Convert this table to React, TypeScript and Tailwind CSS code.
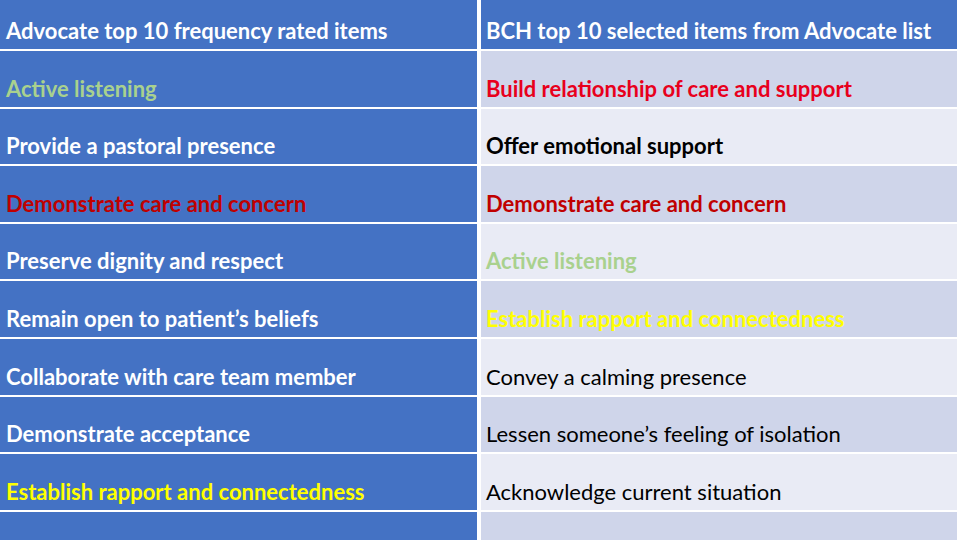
import { Fragment } from 'react';

const rows: { left: string; leftColor: string; right: string; rightColor: string; rightBold: boolean }[] = [
  { left: 'Active listening', leftColor: 'text-[#a9d18e]', right: 'Build relationship of care and support', rightColor: 'text-[#e8001c]', rightBold: true },
  { left: 'Provide a pastoral presence', leftColor: 'text-white', right: 'Offer emotional support', rightColor: 'text-black', rightBold: true },
  { left: 'Demonstrate care and concern', leftColor: 'text-[#c00000]', right: 'Demonstrate care and concern', rightColor: 'text-[#c00000]', rightBold: true },
  { left: 'Preserve dignity and respect', leftColor: 'text-white', right: 'Active listening', rightColor: 'text-[#a9d18e]', rightBold: true },
  { left: 'Remain open to patient\u2019s beliefs', leftColor: 'text-white', right: 'Establish rapport and connectedness', rightColor: 'text-[#ffff00]', rightBold: true },
  { left: 'Collaborate with care team member', leftColor: 'text-white', right: 'Convey a calming presence', rightColor: 'text-black', rightBold: false },
  { left: 'Demonstrate acceptance', leftColor: 'text-white', right: 'Lessen someone\u2019s feeling of isolation', rightColor: 'text-black', rightBold: false },
  { left: 'Establish rapport and connectedness', leftColor: 'text-[#ffff00]', right: 'Acknowledge current situation', rightColor: 'text-black', rightBold: false },
];

export default function App() {
  return (
    <div className="w-[960px] h-[540px] overflow-hidden bg-white font-['Lato',sans-serif] text-[22px] leading-[24px]">
      <div className="grid grid-cols-[477px_476px] gap-x-[4px] gap-y-[2px] auto-rows-[55.6px] grid-rows-[49px]">
        {/* header */}
        <div className="flex items-end pl-[6px] pb-[6px] bg-[#4472c4] font-bold text-white whitespace-nowrap">
          Advocate top 10 frequency rated items
        </div>
        <div className="flex items-end pl-[5px] pb-[6px] bg-[#4472c4] font-bold text-white whitespace-nowrap">
          BCH top 10 selected items from Advocate list
        </div>

        {rows.map((r, i) => (
          <Fragment key={i}>
            <div className={`flex items-end pl-[6px] pb-[6px] bg-[#4472c4] font-bold whitespace-nowrap ${r.leftColor}`}>
              {r.left}
            </div>
            <div
              className={`flex items-end pl-[5px] pb-[6px] whitespace-nowrap ${i % 2 === 0 ? 'bg-[#cfd5ea]' : 'bg-[#e9ebf5]'} ${r.rightBold ? 'font-bold' : 'font-normal'} ${r.rightColor}`}
            >
              {r.right}
            </div>
          </Fragment>
        ))}

        {/* empty last row */}
        <div className="bg-[#4472c4]" />
        <div className="bg-[#cfd5ea]" />
      </div>
    </div>
  );
}
